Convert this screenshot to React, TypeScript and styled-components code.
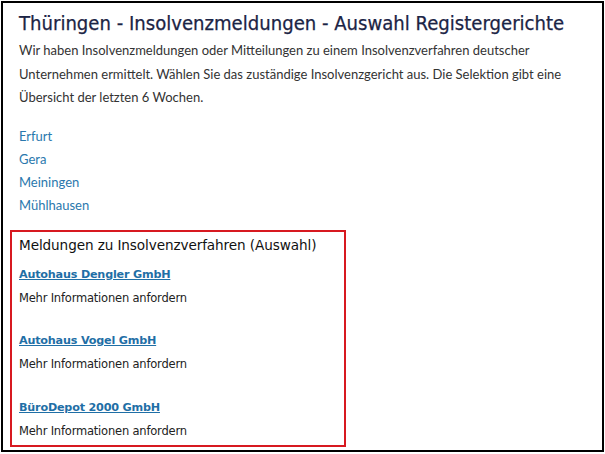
import React from "react";
import styled, { createGlobalStyle } from "styled-components";

const Global = createGlobalStyle`
  html, body { margin: 0; padding: 0; background: #fff; }
  * { box-sizing: border-box; }
`;

const Frame = styled.div`
  margin: 1px;
  width: 603px;
  height: 451px;
  border: 2px solid #000;
  padding: 6px 0 0 0;
  display: flex;
  flex-direction: column;
  overflow: hidden;
`;

const Title = styled.h1`
  margin: 0 0 0 16px;
  font-family: "DejaVu Sans Condensed", "DejaVu Sans", sans-serif;
  font-stretch: condensed;
  font-weight: normal;
  font-size: 20.1px;
  line-height: 28px;
  white-space: nowrap;
  color: #1b2445;
  -webkit-text-stroke: 0.25px #1b2445;
`;

const Intro = styled.p`
  margin: 2px 16px 0 16px;
  font-family: Lato, sans-serif;
  font-size: 13px;
  line-height: 23.5px;
  color: #333;
`;

const Courts = styled.ul`
  list-style: none;
  margin: 15px 0 0 16px;
  padding: 0;
  display: flex;
  flex-direction: column;
`;

const CourtLink = styled.a`
  font-family: Lato, sans-serif;
  font-size: 13px;
  line-height: 23px;
  color: #2a78ad;
  text-decoration: none;
`;

const Box = styled.section`
  margin: 13px 0 0 7px;
  width: 336px;
  border: 2px solid #d71920;
  padding: 3px 7px 1px 7px;
  display: flex;
  flex-direction: column;
`;

const BoxTitle = styled.h2`
  margin: 0;
  font-family: "DejaVu Sans", sans-serif;
  font-weight: normal;
  font-size: 13.6px;
  line-height: 20px;
  color: #111;
  letter-spacing: -0.1px;
`;

const Entry = styled.div<{ $first?: boolean }>`
  display: flex;
  flex-direction: column;
  margin-top: ${(p) => (p.$first ? "9px" : "19.5px")};
`;

const Company = styled.a`
  font-family: "DejaVu Sans", sans-serif;
  font-weight: bold;
  font-size: 11.2px;
  line-height: 22px;
  color: #1f6fa6;
  text-decoration: underline;
  letter-spacing: -0.2px;
`;

const More = styled.span`
  font-family: "DejaVu Sans", sans-serif;
  font-size: 11.5px;
  line-height: 25px;
  color: #222;
  letter-spacing: -0.2px;
`;

const courts = ["Erfurt", "Gera", "Meiningen", "Mühlhausen"];
const companies = ["Autohaus Dengler GmbH", "Autohaus Vogel GmbH", "BüroDepot 2000 GmbH"];

export default function App() {
  return (
    <>
      <Global />
      <Frame>
        <Title>Thüringen - Insolvenzmeldungen - Auswahl Registergerichte</Title>
        <Intro>
          Wir haben Insolvenzmeldungen oder Mitteilungen zu einem Insolvenzverfahren deutscher
          Unternehmen ermittelt. Wählen Sie das zuständige Insolvenzgericht aus. Die Selektion gibt eine
          Übersicht der letzten 6 Wochen.
        </Intro>
        <Courts>
          {courts.map((c) => (
            <li key={c}>
              <CourtLink href="#">{c}</CourtLink>
            </li>
          ))}
        </Courts>
        <Box>
          <BoxTitle>Meldungen zu Insolvenzverfahren (Auswahl)</BoxTitle>
          {companies.map((c, i) => (
            <Entry key={c} $first={i === 0}>
              <Company href="#">{c}</Company>
              <More>Mehr Informationen anfordern</More>
            </Entry>
          ))}
        </Box>
      </Frame>
    </>
  );
}
